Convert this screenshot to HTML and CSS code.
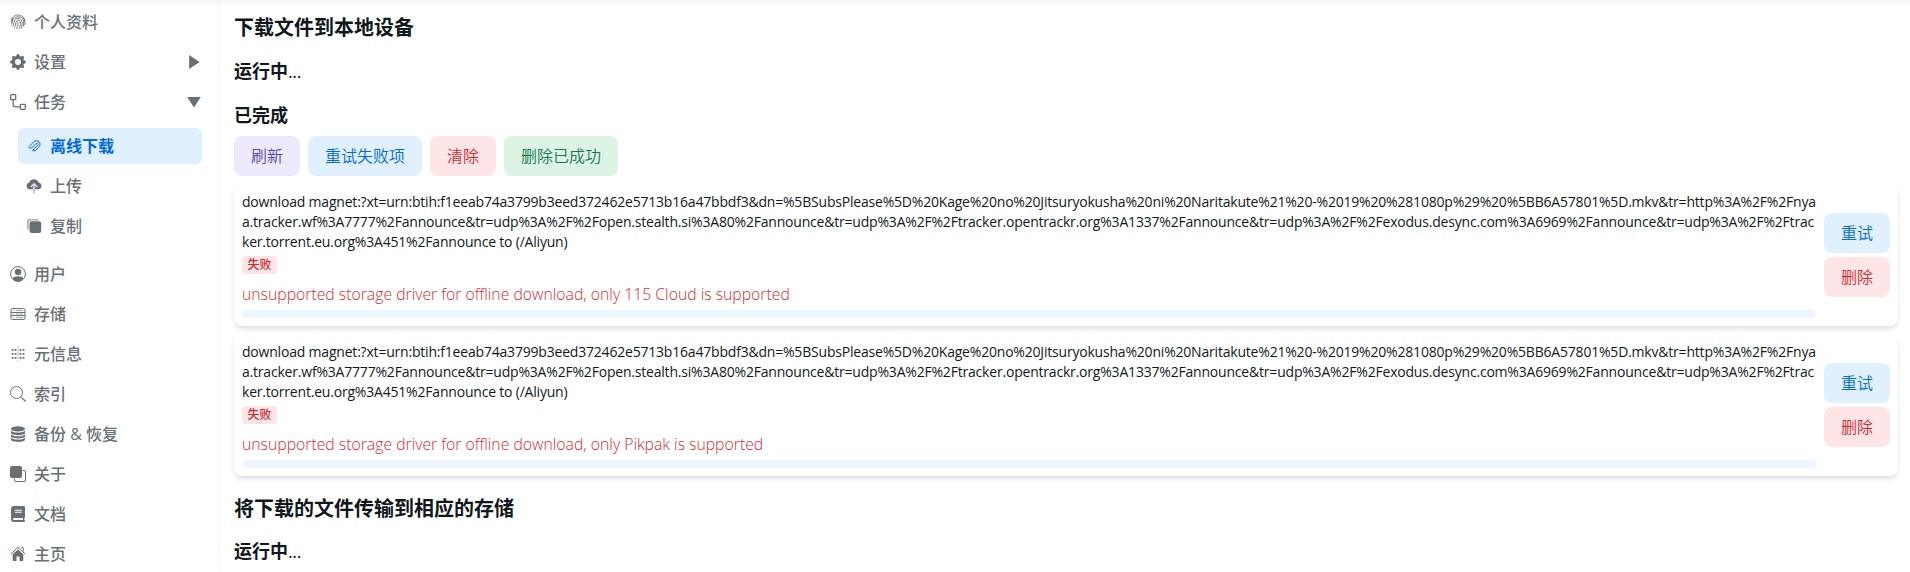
FILE: index.html
```
<!DOCTYPE html>
<html lang="zh-CN">
<head>
<meta charset="utf-8">
<title>离线下载</title>
<link rel="stylesheet" href="styles.css">
</head>
<body>
<div class="app">
  <nav class="sidebar">
    <a class="item"><svg class="icon thin" viewBox="0 0 16 16"><path d="M1.2 7C1.6 3.500 4.300 1 8 1s6.800 2.500 6.900 6.500M1.500 10.500C2.800 8 2.300 3 8 2.800s6.200 5 5.300 9.700M2.500 12.300C4.800 9.500 3.300 4.700 8 4.500s4.800 5.500 3.300 9.800M4 13.800C6.800 10.500 5 6.400 8 6.200s3.200 5 .8 9M6 15c2-2.500 2-5 2-7M12.800 3.500c2.400 2 2.300 5 1.900 7.500M3 3.500 1.500 8.500"/></svg><span>个人资料</span></a>
    <a class="item"><svg class="icon" viewBox="0 0 16 16"><path d="M9.405 1.050c-.413-1.400-2.397-1.400-2.810 0l-.1.340a1.464 1.464 0 0 1-2.105.872l-.310-.170c-1.283-.698-2.686.705-1.987 1.987l.169.311c.446.820.023 1.841-.872 2.105l-.340.100c-1.400.413-1.400 2.397 0 2.810l.340.100a1.464 1.464 0 0 1 .872 2.105l-.170.310c-.698 1.283.705 2.686 1.987 1.987l.311-.169a1.464 1.464 0 0 1 2.105.872l.100.340c.413 1.400 2.397 1.400 2.810 0l.100-.340a1.464 1.464 0 0 1 2.105-.872l.310.170c1.283.698 2.686-.705 1.987-1.987l-.169-.311a1.464 1.464 0 0 1 .872-2.105l.340-.100c1.400-.413 1.400-2.397 0-2.810l-.340-.100a1.464 1.464 0 0 1-.872-2.105l.170-.310c.698-1.283-.705-2.686-1.987-1.987l-.311.169a1.464 1.464 0 0 1-2.105-.872zM8 10.930a2.929 2.929 0 1 1 0-5.860 2.929 2.929 0 0 1 0 5.858z"/></svg><span>设置</span><svg class="arrow" viewBox="0 0 16 16"><path d="M3.200 1v14L13.700 8z"/></svg></a>
    <a class="item"><svg class="icon line" viewBox="0 0 16 16"><rect x=".7" y=".7" width="5" height="5" rx=".8"/><rect x="10.300" y="10.300" width="5" height="5" rx=".8"/><path d="M3.200 5.700v5.100q0 2 2 2h5.100"/></svg><span>任务</span><svg class="arrow" viewBox="0 0 16 16"><path d="M1.200 3h13.600L8 13.500z"/></svg></a>
    <div class="submenu">
      <a class="item active"><svg class="icon clip" viewBox="0 0 16 16"><path d="M3.200 8.500 7.600 3.900C9 2.500 11.500 2.200 13 3.600s1.300 3.800-.2 5.300L9 12.800 7.500 11.300 11.300 7.400c.8-.9.700-1.600.3-2s-1.300-.3-2 .4L5.500 10.100 2.700 9.600M7.500 11.300 6.700 12.700 9 12.800"/></svg><span>离线下载</span></a>
      <a class="item"><svg class="icon" viewBox="0 0 16 16"><path d="M4 11.300a3.500 3.500 0 0 1-.7-6.900A5 5 0 0 1 12.700 4.600 3.400 3.400 0 0 1 12.500 11.300H9.100V7.600l1.700 1.600.8-.8L8 5 4.400 8.400l.8.800 1.700-1.600v3.700z"/><path opacity=".55" d="M7.300 6.500h1.400v9H7.300z"/></svg><span>上传</span></a>
      <a class="item"><svg class="icon" viewBox="0 0 16 16"><path opacity=".55" d="M3 1h8a2 2 0 0 1 2 1.600H4.700A2 2 0 0 0 2.700 4.600V12A2 2 0 0 1 1 10.500V3a2 2 0 0 1 2-2z"/><rect x="3.500" y="3.300" width="11.700" height="11.700" rx="2.300"/></svg><span>复制</span></a>
    </div>
    <a class="item"><svg class="icon" viewBox="0 0 16 16"><circle class="ring" cx="8" cy="8" r="7.400"/><circle cx="8" cy="6" r="3.200"/><path d="M2.400 12.700C3.500 11 5.500 10.300 8 10.300s4.500.7 5.600 2.400A7.500 7.500 0 0 1 8 15.500a7.500 7.500 0 0 1-5.600-2.800z"/></svg><span>用户</span></a>
    <a class="item"><svg class="icon rack" viewBox="0 0 16 16"><rect x="1" y="2.500" width="14" height="11" rx="1.500"/><path d="M1 6.500h14M1 9.500h14"/><path d="M3 4.500h1M6 4.500h7M3 8h1M6 8h7M3 11.500h1M6 11.500h7" class="hair"/></svg><span>存储</span></a>
    <a class="item"><svg class="icon dots" viewBox="0 0 16 16"><path d="M2.500 3v10.500M5.500 3v10.500M10.500 3v10.500M13.500 3v10.500"/><path class="faint" d="M8 0v16M1.500 4h13M1.500 8h13M1.500 12h13"/></svg><span>元信息</span></a>
    <a class="item"><svg class="icon" viewBox="0 0 16 16"><circle class="ring" cx="6.500" cy="6.500" r="6"/><path d="m10.400 11.100.7-.7 4.600 4.100q.4.500 0 1t-1 .1z"/></svg><span>索引</span></a>
    <a class="item"><svg class="icon" viewBox="0 0 16 16"><ellipse cx="8" cy="2.900" rx="7" ry="2.700"/><path d="M1 4.800c1.500 1.400 4 1.800 7 1.800s5.500-.4 7-1.800v2.300C15 8.300 12 9.200 8 9.200S1 8.300 1 7.100zM1 8.400c1.500 1.400 4 1.800 7 1.800s5.500-.4 7-1.800v1.900c0 1.300-3 2.100-7 2.100s-7-.8-7-2.100zM1 11.700c1.500 1.400 4 1.800 7 1.800s5.500-.4 7-1.800v1.900C15 15 12 15.900 8 15.900S1 15 1 13.600z"/></svg><span>备份 &amp; 恢复</span></a>
    <a class="item"><svg class="icon" viewBox="0 0 16 16"><rect width="12" height="12" rx="2"/><path class="ring" d="M12.500 4.500H14a1.500 1.500 0 0 1 1.500 1.500v8a1.500 1.500 0 0 1-1.500 1.500H6A1.500 1.500 0 0 1 4.500 14v-1.500"/></svg><span>关于</span></a>
    <a class="item"><svg class="icon" viewBox="0 0 16 16"><path fill-rule="evenodd" d="M4 0h10q1 0 1 1v10q0 .8-.6 1v2q.6.200.6 1t-1 1H4a3 3 0 0 1-3-3V3a3 3 0 0 1 3-3zm.8 3.800v1h7v-1zm0 2v1h7v-1zM4 12a1 1 0 0 0 0 2h9v-2z"/></svg><span>文档</span></a>
    <a class="item"><svg class="icon" viewBox="0 0 16 16"><path d="M8 3.500 2.700 8.300V14q0 1 1 1h2.800v-4.500h3V15h2.800q1 0 1-1V8.300z"/><path d="m.7 8 7.300-6.600L15.300 8M11 1.800h2.300v3.500" class="ring"/></svg><span>主页</span></a>
  </nav>
  <main class="main">
    <h1 class="title">下载文件到本地设备</h1>
    <h2 class="subtitle">运行中<span class="ellipsis">...</span></h2>
    <h2 class="subtitle">已完成</h2>
    <div class="actions">
      <button class="btn accent">刷新</button>
      <button class="btn info">重试失败项</button>
      <button class="btn danger">清除</button>
      <button class="btn success">删除已成功</button>
    </div>
    <section class="card">
      <div class="body">
        <h3 class="name"><span>download magnet:?xt=urn:btih:f1eeab74a3799b3eed372462e5713b16a47bbdf3&amp;dn=%5BSubsPlease%5D%20Kage%20no%20Jitsuryokusha%20ni%20Naritakute%21%20-%2019%20%281080p%29%20%5BB6A57801%5D.mkv&amp;tr=http%3A%2F%2Fnya</span><span>a.tracker.wf%3A7777%2Fannounce&amp;tr=udp%3A%2F%2Fopen.stealth.si%3A80%2Fannounce&amp;tr=udp%3A%2F%2Ftracker.opentrackr.org%3A1337%2Fannounce&amp;tr=udp%3A%2F%2Fexodus.desync.com%3A6969%2Fannounce&amp;tr=udp%3A%2F%2Ftrac</span><span>ker.torrent.eu.org%3A451%2Fannounce to (/Aliyun)</span></h3>
        <span class="badge">失败</span>
        <p class="error">unsupported storage driver for offline download, only 115 Cloud is supported</p>
        <div class="progress"></div>
      </div>
      <div class="side">
        <button class="btn info">重试</button>
        <button class="btn danger">删除</button>
      </div>
    </section>
    <section class="card">
      <div class="body">
        <h3 class="name"><span>download magnet:?xt=urn:btih:f1eeab74a3799b3eed372462e5713b16a47bbdf3&amp;dn=%5BSubsPlease%5D%20Kage%20no%20Jitsuryokusha%20ni%20Naritakute%21%20-%2019%20%281080p%29%20%5BB6A57801%5D.mkv&amp;tr=http%3A%2F%2Fnya</span><span>a.tracker.wf%3A7777%2Fannounce&amp;tr=udp%3A%2F%2Fopen.stealth.si%3A80%2Fannounce&amp;tr=udp%3A%2F%2Ftracker.opentrackr.org%3A1337%2Fannounce&amp;tr=udp%3A%2F%2Fexodus.desync.com%3A6969%2Fannounce&amp;tr=udp%3A%2F%2Ftrac</span><span>ker.torrent.eu.org%3A451%2Fannounce to (/Aliyun)</span></h3>
        <span class="badge">失败</span>
        <p class="error">unsupported storage driver for offline download, only Pikpak is supported</p>
        <div class="progress"></div>
      </div>
      <div class="side">
        <button class="btn info">重试</button>
        <button class="btn danger">删除</button>
      </div>
    </section>
    <h1 class="title next">将下载的文件传输到相应的存储</h1>
    <h2 class="subtitle">运行中<span class="ellipsis">...</span></h2>
  </main>
</div>
</body>
</html>
```
FILE: styles.css
```
* { box-sizing: border-box; }
body {
  margin: 0;
  height: 572px;
  overflow: hidden;
  background: #fff;
  color: #11181c;
  font: 16px/24px "Open Sans", "Noto Sans CJK SC", sans-serif;
}
.app {
  display: flex;
  height: 572px;
  box-shadow: inset 0 4px 4px -2px rgba(0, 0, 0, .05);
}
.sidebar {
  flex: none;
  width: 218px;
  padding: 4px 8px 0 2px;
  display: flex;
  flex-direction: column;
  gap: 4px;
  color: #687076;
  font-weight: 500;
  box-shadow: 1px 0 4px rgba(0, 0, 0, .06);
}
.item {
  flex: none;
  height: 36px;
  padding: 0 8px;
  display: flex;
  align-items: center;
  gap: 8px;
  border-radius: 6px;
}
.submenu {
  display: flex;
  flex-direction: column;
  gap: 4px;
  padding: 4px 8px 8px 16px;
}
.active { background: #e1f0ff; color: #006adc; font-weight: 700; }
.icon { width: 16px; height: 16px; flex: none; fill: currentColor; }
.icon.line { fill: none; stroke: currentColor; stroke-width: 1.3; }
.icon.thin { fill: none; stroke: currentColor; stroke-width: .9; }
.icon.clip { fill: none; stroke: currentColor; stroke-width: 1; }
.icon.rack { fill: none; stroke: currentColor; stroke-width: 1; }
.hair { stroke-width: .6; }
.ring { fill: none; stroke: currentColor; stroke-width: 1; }
.dots { stroke: currentColor; stroke-width: 1.6; stroke-dasharray: 1.8 2.2; }
.faint { stroke-width: .8; stroke-dasharray: 1 1; opacity: .6; }
.arrow { width: 16px; height: 16px; margin-left: auto; fill: currentColor; }
.main {
  flex: 1;
  min-width: 0;
  padding: 12px 12px 0 16px;
  display: flex;
  flex-direction: column;
  gap: 8px;
}
h1, h2, h3, p { margin: 0; }
.title { height: 30px; padding-top: 1px; font-size: 20px; line-height: 30px; font-weight: 700; }
.next { margin-top: 9px; }
.subtitle { height: 36px; padding-top: 7px; font-size: 18px; line-height: 28px; font-weight: 700; }
.next + .subtitle { margin-top: -1px; }
.ellipsis { font-weight: 500; letter-spacing: -.4px; }
.actions { display: flex; gap: 8px; margin-top: -2px; }
.btn {
  height: 40px;
  padding: 0 17px;
  border: 0;
  border-radius: 8px;
  font: 16px/24px "Open Sans", "Noto Sans CJK SC", sans-serif;
  font-weight: 350;
}
.accent { background: #ede9fe; color: #5746af; }
.info { background: #e1f0ff; color: #006adc; }
.danger { background: #ffe5e5; color: #cd2b31; }
.success { background: #ddf3e4; color: #18794e; }
.card {
  display: flex;
  align-items: center;
  gap: 8px;
  height: 142px;
  padding: 8px;
  border-radius: 8px;
  background: #fff;
  box-shadow: 0 4px 6px -1px rgba(0, 0, 0, .1), 0 2px 4px -1px rgba(0, 0, 0, .06);
}
.body {
  flex: 1;
  min-width: 0;
  display: flex;
  flex-direction: column;
  align-items: flex-start;
  gap: 4px;
}
.name { font-size: 14px; line-height: 20px; font-weight: 500; letter-spacing: -.2px; }
.name span { display: block; width: max-content; }
.badge {
  height: 18px;
  padding: 0 5.500px;
  border-radius: 4px;
  background: #ffe5e5;
  color: #cd2b31;
  font-size: 12px;
  line-height: 18px;
  font-weight: 500;
}
.error { color: #dc2a30; font-size: 15.800px; font-weight: 350; line-height: 24px; padding-top: 4px; letter-spacing: -.015px; }
.progress { width: 100%; height: 8px; border-radius: 4px; background: #edf6ff; }
.side { display: flex; flex-direction: column; gap: 4px; }
```
